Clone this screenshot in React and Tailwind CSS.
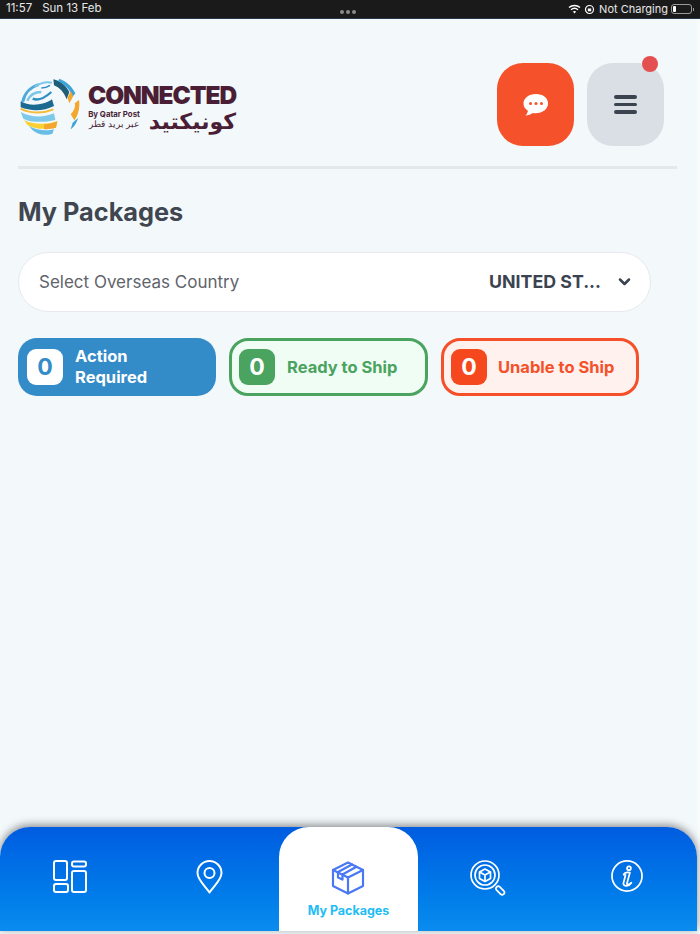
import React from "react";

const font = { inter: "font-['Inter','Liberation_Sans',sans-serif]" };

const StatusBar = () => (
  <div className="relative flex h-[19px] items-center justify-between bg-[#1a1a1a] pl-[6px] pr-[6px] text-[11px] text-[#e8e8e8] border-b border-[#2a3550]">
    <div className="flex gap-[10px] text-[11.500px]">
      <span>11:57</span>
      <span>Sun 13 Feb</span>
    </div>
    <div className="absolute left-[340px] top-[10px] flex gap-[2px]">
      <span className="h-[4px] w-[4px] rounded-full bg-[#8a8a8a]"></span>
      <span className="h-[4px] w-[4px] rounded-full bg-[#8a8a8a]"></span>
      <span className="h-[4px] w-[4px] rounded-full bg-[#8a8a8a]"></span>
    </div>
    <div className="flex items-center">
      <svg width="13" height="10" viewBox="0 0 13 10" className="mr-[3px]">
        <path d="M1 3.600C4.200.7 8.800.7 12 3.600" stroke="#fff" strokeWidth="1.400" fill="none" />
        <path d="M3 5.800c2.100-1.800 4.900-1.800 7 0" stroke="#fff" strokeWidth="1.400" fill="none" />
        <path d="M4.800 7.600c1-.8 2.400-.8 3.400 0L6.500 9.500z" fill="#fff" />
      </svg>
      <svg width="11" height="11" viewBox="0 0 11 11" className="mr-[4px]">
        <circle cx="5.500" cy="5.500" r="4" stroke="#fff" strokeWidth="1.200" fill="none" />
        <rect x="3.800" y="4.500" width="3.400" height="2.800" fill="#fff" />
      </svg>
      <span>Not Charging</span>
      <div className="ml-[3px] flex items-center">
        <div className="h-[10px] w-[21px] rounded-[3px] border border-[#9a9a9a] p-[1px]">
          <div className="h-full w-[3px] rounded-[1px] bg-white"></div>
        </div>
        <div className="ml-[1px] h-[3px] w-[1px] bg-[#9a9a9a]"></div>
      </div>
    </div>
  </div>
);

const Globe = () => (
  <svg width="60" height="60" viewBox="28 10 180 180">
    {/* upper left arcs */}
    <path d="M36 88 C42 60 62 42 84 36" stroke="#4fa9da" strokeWidth="9" fill="none" />
    <path d="M50 84 C58 66 74 58 92 58" stroke="#7cc6e8" strokeWidth="8" fill="none" />
    <path d="M66 78 C80 84 100 78 122 58" stroke="#2f8fc4" strokeWidth="7" fill="none" />
    <path d="M72 42 C90 30 106 26 124 30" stroke="#7cc6e8" strokeWidth="6" fill="none" />
    <path d="M92 46 C104 46 112 42 118 38" stroke="#2f8fc4" strokeWidth="5" fill="none" />
    {/* left bands */}
    <path d="M30 86 C55 102 100 98 124 80 L130 100 C100 116 60 116 30 104Z" fill="#1a6a91" />
    <path d="M30 108 C55 122 95 124 128 110" stroke="#f5bd3a" strokeWidth="6" fill="none" />
    <path d="M30 118 C60 135 100 135 130 122 L134 142 C100 150 60 150 38 138Z" fill="#7ec8ea" />
    <path d="M40 142 C65 155 105 158 140 146 L136 165 C100 172 65 168 50 156Z" fill="#fbd035" />
    <path d="M100 155 C115 155 128 150 140 146 L136 165 C125 168 112 169 100 170Z" fill="#f3a72e" />
    <path d="M55 160 C80 175 110 175 130 170 L125 183 C100 191 80 185 65 172Z" fill="#68bde6" />
    {/* right bands */}
    <path d="M128 20 C150 24 166 40 176 58 L168 80 C160 58 146 44 130 38Z" fill="#1f5d78" />
    <path d="M146 18 C168 26 186 44 194 62 L186 72 C178 52 164 36 142 26Z" fill="#3ea3d6" />
    <path d="M180 56 C184 62 186 66 187 72 L176 92 C174 84 172 80 170 76Z" fill="#f3a72e" />
    <path d="M205 82 C209 105 201 130 191 143 L180 125 C190 115 196 100 192 92Z" fill="#f3a72e" />
    <path d="M202 136 C198 152 188 165 180 170 L186 150Z" fill="#3ea3d6" />
  </svg>
);

const Header = () => (
  <div className="flex h-[150px] items-start justify-between border-b-[3px] border-[#e4e8eb] pt-[44px] pr-[13px]">
    <div className="mt-[13px] ml-[2px] flex items-start gap-[8px]">
      <Globe />
      <div className="mt-[7px] flex w-[148px] flex-col">
        <span className="text-[24.500px] leading-[24px] font-black tracking-[-1.100px] text-[#4a1f36]">CONNECTED</span>
        <div className="mt-[3px] flex items-center justify-between">
          <div className="flex w-[52px] shrink-0 flex-col items-center text-[7.800px] leading-[9px] font-bold whitespace-nowrap text-[#4a1f36]">
            <span>By Qatar Post</span>
            <span dir="rtl" className="text-[9px] leading-[10px] font-normal">عبر بريد قطر</span>
          </div>
          <span dir="rtl" className="font-['Noto_Sans','DejaVu_Sans',sans-serif] text-[22px] leading-[18px] font-bold whitespace-nowrap text-[#4a1f36]">كونيكتيد</span>
        </div>
      </div>
    </div>
    <div className="flex gap-[13px]">
      <button className="flex h-[83px] w-[77px] items-center justify-center rounded-[26px] bg-[#f5522b]">
        <svg width="28" height="24" viewBox="0 0 28 24">
          <path d="M14 1C6.800 1 1.500 5.200 1.500 10.500c0 3 1.700 5.600 4.400 7.300-.2 1.700-1 3.400-2.400 4.700 2.800-.1 5.400-1.200 7.200-2.600 1 .2 1.900.3 2.800.3 7.200 0 12.500-4.200 12.500-9.700S21.200 1 14 1z" fill="#fff" />
          <circle cx="8.500" cy="10.500" r="1.500" fill="#f5522b" />
          <circle cx="14" cy="10.500" r="1.500" fill="#f5522b" />
          <circle cx="19.500" cy="10.500" r="1.500" fill="#f5522b" />
        </svg>
      </button>
      <button className="relative flex h-[83px] w-[77px] items-center justify-center rounded-[26px] bg-[#dadfe5]">
        <span className="absolute top-[-7px] right-[6px] h-[16px] w-[16px] rounded-full bg-[#e3504f]"></span>
        <div className="flex flex-col gap-[4px]">
          <span className="h-[3.500px] w-[23px] rounded-full bg-[#3b4350]"></span>
          <span className="h-[3.500px] w-[23px] rounded-full bg-[#3b4350]"></span>
          <span className="h-[3.500px] w-[23px] rounded-full bg-[#3b4350]"></span>
        </div>
      </button>
    </div>
  </div>
);

const Stat = ({ className, boxClass, label }) => (
  <div className={`flex h-[58px] items-center rounded-[19px] ${className}`}>
    <div className={`flex h-[36px] w-[36px] shrink-0 items-center justify-center rounded-[9px] text-[23px] font-bold ${boxClass}`}>0</div>
    {label}
  </div>
);

const BoxIcon = () => (
  <svg width="34" height="34" viewBox="0 0 34 34" fill="none" stroke="#4a78f5" strokeWidth="2.200" strokeLinejoin="round" strokeLinecap="round">
    <path d="M17 1.500 L32 9 V25 L17 32.500 L2 25 V9 Z" />
    <path d="M2 9 L17 16.500 L32 9" />
    <path d="M17 16.500 V32.500" />
    <path d="M21 3.500 L7 11" />
    <path d="M25.500 5.800 L11.500 13.500" />
    <path d="M7 11 V16.500 L11.500 18.500 V13.500" />
  </svg>
);

const NavItem = ({ children }) => (
  <div className="flex justify-center pt-[33px]">{children}</div>
);

const BottomNav = () => (
  <div className="grid h-[104px] w-[697px] grid-cols-5 overflow-hidden rounded-t-[30px] bg-gradient-to-b from-[#005ce0] to-[#0b8cee] shadow-[0_-2px_8px_rgba(0,0,0,0.45)]">
    <NavItem>
      <svg width="34" height="33" viewBox="0 0 34 33" fill="none" stroke="#fff" strokeWidth="2">
        <rect x="1" y="1" width="13" height="19" rx="2" />
        <rect x="19" y="1.500" width="14" height="5" rx="2" />
        <rect x="19" y="11" width="14" height="21" rx="2" />
        <rect x="1" y="24" width="14" height="8" rx="2" />
      </svg>
    </NavItem>
    <NavItem>
      <svg width="27" height="34" viewBox="0 0 27 34" fill="none" stroke="#fff" strokeWidth="2">
        <path d="M13.500 32.500 C10 27 1.500 20 1.500 13 A12 12 0 0 1 25.500 13 C25.500 20 17 27 13.500 32.500Z" strokeLinejoin="round" />
        <circle cx="13.500" cy="13" r="5" />
      </svg>
    </NavItem>
    <div className="flex flex-col items-center rounded-t-[30px] bg-white pt-[34px]">
      <BoxIcon />
      <span className="mt-[9px] text-[12.500px] leading-[14px] font-bold whitespace-nowrap text-[#1fbdf5]">My Packages</span>
    </div>
    <NavItem>
      <svg width="36" height="36" viewBox="0 0 36 36" fill="none" stroke="#fff" strokeWidth="1.700" strokeLinejoin="round" className="ml-[1px]">
        <circle cx="15" cy="15" r="14" />
        <circle cx="15" cy="15" r="10" />
        <path d="M15 9 L20.500 12 V18.500 L15 21.500 L9.500 18.500 V12 Z" />
        <path d="M9.500 12 L15 15 L20.500 12 M15 15 V21.500" />
        <rect x="25.500" y="28" width="10" height="4.500" rx="2.200" transform="rotate(45 30 30)" />
      </svg>
    </NavItem>
    <NavItem>
      <svg width="32" height="32" viewBox="0 0 33 33" fill="none" stroke="#fff" strokeWidth="1.800">
        <circle cx="16.500" cy="16.500" r="15.500" />
        <circle cx="18.500" cy="8.500" r="2" />
        <path d="M13 15 C14 13 17 12.500 19.500 13 L16.500 24 C16 26 18 26 21 23.500 C19 27 12.500 28 12.800 24 L15 15.500 Z" strokeLinejoin="round" />
      </svg>
    </NavItem>
  </div>
);

export default function App() {
  return (
    <div className={`relative flex h-[934px] w-[700px] flex-col overflow-hidden bg-[#f8fbfc] ${font.inter}`}>
      <StatusBar />
      <div className="flex w-[697px] flex-1 flex-col bg-[#f3f8fb]">
        <div className="flex-1 pl-[18px]">
          <div className="w-[659px]">
            <Header />
            <h1 className="mt-[27px] text-[25.300px] leading-[32px] font-bold text-[#3f4650]">My Packages</h1>
            <div className="mt-[24px] flex h-[60px] w-[633px] items-center justify-between rounded-[30px] border border-[#e6e9ee] bg-white pr-[19px] pl-[20px]">
              <span className="pt-[1px] text-[17px] text-[#5f646c]">Select Overseas Country</span>
              <div className="flex items-center gap-[17px]">
                <span className="pt-[1px] text-[17.800px] font-bold text-[#3b4350]">UNITED ST...</span>
                <svg width="13" height="10" viewBox="0 0 13 10" fill="none" stroke="#3b4350" strokeWidth="2.500" strokeLinecap="round" strokeLinejoin="round">
                  <path d="M2 2.500 L6.500 7 L11 2.500" />
                </svg>
              </div>
            </div>
            <div className="mt-[26px] flex gap-[13px]">
              <Stat
                className="w-[198px] shrink-0 bg-[#338bc8] pl-[9px]"
                boxClass="bg-white text-[#338bc8]"
                label={<span className="ml-[12px] text-[16.500px] leading-[21px] font-bold text-white">Action<br />Required</span>}
              />
              <Stat
                className="w-[199px] shrink-0 border-[3px] border-[#4aa35f] bg-[#f0fdf4] pl-[7px]"
                boxClass="bg-[#4aa35f] text-white"
                label={<span className="ml-[12px] text-[16.500px] font-bold text-[#4aa35f]">Ready to Ship</span>}
              />
              <Stat
                className="w-[198px] shrink-0 border-[3px] border-[#f5502a] bg-[#fef1ee] pl-[7px]"
                boxClass="bg-[#f5481e] text-white"
                label={<span className="ml-[11px] text-[16.500px] font-bold text-[#f5502a]">Unable to Ship</span>}
              />
            </div>
          </div>
        </div>
        <div className="pb-[3px]">
          <BottomNav />
        </div>
      </div>
    </div>
  );
}
